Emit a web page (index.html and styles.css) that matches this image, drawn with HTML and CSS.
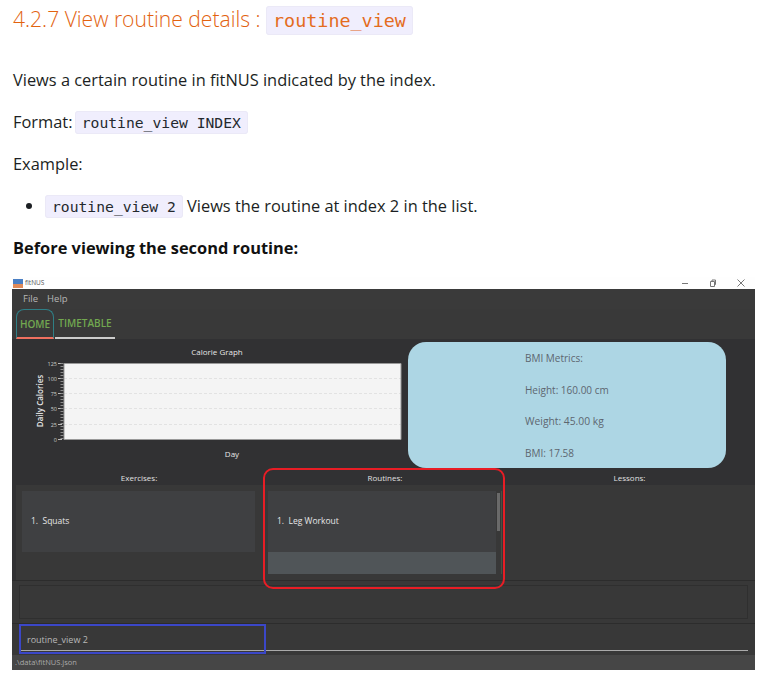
FILE: index.html
```html
<!DOCTYPE html>
<html lang="en">
<head>
    <meta charset="UTF-8">
    <meta name="viewport" content="width=device-width, initial-scale=1.0">
    <title>View routine details</title>
    <link rel="stylesheet" href="styles.css">
</head>
<body>
    <h4 class="heading">4.2.7 View routine details : <code>routine_view</code></h4>
    <p>Views a certain routine in fitNUS indicated by the index.</p>
    <p>Format: <code class="format-code">routine_view INDEX</code></p>
    <p>Example:</p>
    <ul>
        <li><code>routine_view 2</code> Views the routine at index 2 in the list.</li>
    </ul>
    <p><strong>Before viewing the second routine:</strong></p>

    <div class="shot">
        <div class="titlebar">
            <svg class="app-icon" width="10" height="9" viewBox="0 0 10 9"><rect width="10" height="5" fill="#4a7fc4"/><rect y="5" width="10" height="4" fill="#e08a58"/></svg>
            <span class="app-name">fitNUS</span>
            <div class="win-controls">
                <svg width="8" height="8" viewBox="0 0 8 8"><path d="M1 4.500H7" stroke="#777" fill="none"/></svg>
                <svg width="8" height="8" viewBox="0 0 8 8"><path d="M1.500 2.500H5.500V7.500H1.500ZM3 2.500V1H6.500V5.500H5.500" stroke="#777" fill="none"/></svg>
                <svg width="8" height="8" viewBox="0 0 8 8"><path d="M.5 .5L7.500 7.500M7.500 .5L.5 7.500" stroke="#777" fill="none"/></svg>
            </div>
        </div>
        <div class="menubar"><span>File</span><span>Help</span></div>
        <div class="tabs">
            <div class="tab tab-home">HOME</div>
            <div class="tab tab-timetable">TIMETABLE</div>
        </div>
        <div class="top-row">
            <div class="chart">
                <div class="chart-title">Calorie Graph</div>
                <svg class="chart-svg" width="396" height="90" viewBox="0 0 396 90">
                    <text class="axis-name" transform="translate(31 46) rotate(-90)" text-anchor="middle">Daily Calories</text>
                    <g class="tick-label" text-anchor="end">
                        <text x="45" y="11">125</text>
                        <text x="45" y="26">100</text>
                        <text x="45" y="41">75</text>
                        <text x="45" y="56">50</text>
                        <text x="45" y="72">25</text>
                        <text x="45" y="87">0</text>
                    </g>
                    <path d="M46 8.500H50M46 23.500H50M46 38.500H50M46 53.500H50M46 69.500H50M46 84.500H50" stroke="#bbb"/>
                    <path d="M50 8V85" stroke="#8d8d8d" stroke-width="3" stroke-dasharray="1 2"/>
                    <rect x="52" y="8" width="337" height="77" fill="#f4f4f4"/>
                    <path d="M52 23.500H389M52 38.500H389M52 53.500H389M52 69.500H389" stroke="#e2e2e2" stroke-dasharray="3 2"/>
                    <path d="M52 8.500H389V84.500H52Z" stroke="#999" fill="none"/>
                </svg>
                <div class="chart-x">Day</div>
            </div>
            <div class="bmi">
                <div>BMI Metrics:</div>
                <div>Height: 160.00 cm</div>
                <div class="bmi-weight">Weight: 45.00 kg</div>
                <div>BMI: 17.58</div>
            </div>
        </div>
        <div class="lists">
            <div class="list-col">
                <div class="list-label">Exercises:</div>
                <div class="list-body list-exercises">
                    <div class="card">1.&nbsp; Squats</div>
                </div>
            </div>
            <div class="list-col">
                <div class="list-label">Routines:</div>
                <div class="list-body list-routines">
                    <div class="card">1.&nbsp; Leg Workout</div>
                    <div class="card-empty"></div>
                    <div class="scroll-track"></div>
                    <div class="scrollbar"></div>
                </div>
            </div>
            <div class="list-col">
                <div class="list-label list-label-last">Lessons:</div>
                <div class="list-body"></div>
            </div>
        </div>
        <div class="result"><div class="result-inner"></div></div>
        <div class="command"><div class="command-input">routine_view 2</div></div>
        <div class="status">.\data\fitNUS.json</div>
        <div class="mark mark-red"></div>
        <div class="mark mark-blue"></div>
    </div>
</body>
</html>
```

FILE: styles.css
```css
body {
    font-family: "Open Sans", "Noto Sans", sans-serif;
    font-size: 16.4px;
    line-height: 26px;
    color: #1c1f23;
    background-color: #fff;
    margin: 0;
    padding: 0 0 0 13px;
}
code {
    font-family: "DejaVu Sans Mono", monospace;
    font-size: 14.7px;
    line-height: 1;
    color: #24292e;
    background-color: #f0eefd;
    border: 1px solid #ebe9f7;
    border-radius: 3px;
    padding: 2px 6px;
}
.format-code {
    margin-left: -2px;
}
p {
    margin: 0 0 16px;
}
.heading {
    font-size: 21.1px;
    font-weight: 300;
    line-height: 28px;
    color: #e2620f;
    margin: 5px 0 34px;
}
.heading code {
    font-size: 18.4px;
    font-weight: 400;
    color: #e46c1e;
    padding: 3px 6px;
}
ul {
    margin: 0 0 16px;
    padding-left: 32px;
}
strong {
    font-weight: 700;
    color: #111;
}

/* screenshot of the app */
.shot {
    position: relative;
    width: 743px;
    margin: 16px 0 0 -1px;
    background-color: #313133;
    font-family: "Open Sans", sans-serif;
    line-height: 1;
}
.titlebar {
    display: flex;
    align-items: center;
    height: 12px;
    background-color: #fefefe;
}
.app-icon {
    margin-right: 2px;
    margin-left: 1px;
}
.app-name {
    font-size: 6.500px;
    color: #555;
}
.win-controls {
    display: flex;
    gap: 20px;
    margin-left: auto;
    margin-right: 10px;
}
.menubar {
    display: flex;
    gap: 9px;
    height: 20px;
    align-items: center;
    padding-left: 11px;
    font-size: 9.500px;
    color: #b5b5b5;
    background-color: #3a3a3a;
}
.tabs {
    display: flex;
    height: 30px;
    padding-left: 4px;
    background-color: #393939;
}
.tab {
    display: flex;
    align-items: center;
    font-size: 10px;
    font-weight: 600;
    color: #72a850;
}
.tab-home {
    box-sizing: border-box;
    width: 38px;
    justify-content: center;
    border: 1px solid #2f7f86;
    border-bottom: 2px solid #f0705f;
    border-radius: 8px 8px 0 0;
}
.tab-timetable {
    box-sizing: border-box;
    width: 60px;
    margin-left: 1px;
    justify-content: center;
    border-bottom: 2px solid #ccc;
}
.top-row {
    display: flex;
    height: 130px;
    padding-top: 3px;
    box-sizing: border-box;
}
.chart {
    width: 396px;
    color: #e6e6e6;
    font-size: 8px;
}
.chart-title {
    text-align: center;
    height: 13px;
    padding-top: 6px;
    box-sizing: border-box;
    padding-left: 14px;
}
.chart-svg {
    display: block;
}
.chart-x {
    text-align: center;
    padding: 5px 0 0 44px;
}
.axis-name {
    font-size: 8px;
    font-weight: 600;
    fill: #e6e6e6;
}
.tick-label {
    font-size: 5.500px;
    fill: #ccc;
}
.bmi {
    box-sizing: border-box;
    display: flex;
    flex-direction: column;
    justify-content: space-between;
    width: 318px;
    height: 126px;
    padding: 11px 0 10px 117px;
    border-radius: 18px;
    background-color: #add6e4;
    color: #5d6670;
    font-size: 10px;
}
.bmi-weight {
    font-size: 10.300px;
}
.lists {
    display: grid;
    grid-template-columns: 246px 246px 1fr;
    height: 111px;
    padding-left: 4px;
}
.list-label {
    height: 16px;
    padding-top: 5px;
    box-sizing: border-box;
    text-align: center;
    font-size: 8px;
    color: #e0e0e0;
}
.list-label-last {
    padding-right: 4px;
}
.list-body {
    position: relative;
    height: 95px;
    padding: 6px;
    box-sizing: border-box;
    background-color: #383838;
}
.card {
    display: flex;
    align-items: center;
    height: 61px;
    padding-left: 9px;
    font-size: 8.500px;
    color: #e6e6e6;
    background-color: #3f4042;
}
.list-exercises {
    padding-right: 7px;
}
.list-routines {
    padding-right: 12px;
}
.card-empty {
    height: 22px;
    background-color: #505558;
}
.scrollbar {
    position: absolute;
    top: 8px;
    right: 8px;
    width: 3px;
    height: 38px;
    background-color: #6a6a6a;
}
.scroll-track {
    position: absolute;
    top: 6px;
    bottom: 6px;
    right: 6px;
    width: 1px;
    background-color: #4c4f40;
}
.result {
    height: 44px;
    padding: 4px 7px 4px 7px;
    box-sizing: border-box;
    background-color: #383838;
    border-top: 1px solid #2c2c2c;
    border-bottom: 1px solid #2c2c2c;
}
.result-inner {
    height: 100%;
    border: 1px solid #2f2f2f;
    box-sizing: border-box;
}
.command {
    height: 31px;
    padding: 0 7px;
    background-color: #383838;
}
.command-input {
    box-sizing: border-box;
    height: 27px;
    padding: 11px 0 0 8px;
    font-size: 9px;
    color: #b8b8b8;
    border-bottom: 1px solid #aaa;
}
.status {
    height: 15px;
    padding-left: 3px;
    font-size: 7.500px;
    line-height: 15px;
    color: #aaa;
    background-color: #464646;
}

/* annotations drawn over the screenshot */
.mark {
    position: absolute;
    box-sizing: border-box;
}
.mark-red {
    left: 251px;
    top: 191px;
    width: 242px;
    height: 121px;
    border: 2px solid #e81d25;
    border-radius: 10px;
}
.mark-blue {
    left: 7px;
    top: 347px;
    width: 247px;
    height: 30px;
    border: 2px solid #3b47c8;
}
```
